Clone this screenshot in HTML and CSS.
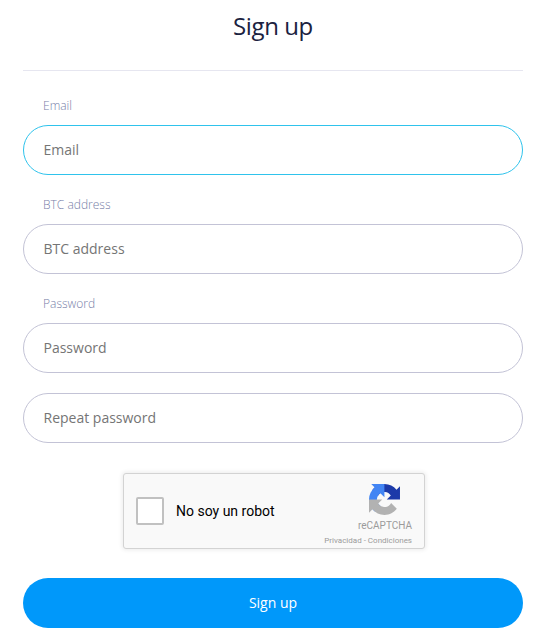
FILE: index.html
```html
<!DOCTYPE html>
<html lang="en">

<head>
    <meta charset="UTF-8">
    <meta name="viewport" content="width=device-width, initial-scale=1.0">
    <title>Sign up</title>
    <link rel="stylesheet" href="styles.css">
</head>

<body>
    <form class="signup">
        <h1 class="title">Sign up</h1>

        <div class="field">
            <label class="field-label" for="email">Email</label>
            <input class="field-input field-input-focus" id="email" type="text" placeholder="Email">
        </div>
        <div class="field">
            <label class="field-label" for="btc">BTC address</label>
            <input class="field-input" id="btc" type="text" placeholder="BTC address">
        </div>
        <div class="field">
            <label class="field-label" for="password">Password</label>
            <input class="field-input" id="password" type="text" placeholder="Password">
        </div>
        <input class="field-input repeat" type="text" placeholder="Repeat password">

        <div class="captcha">
            <span class="captcha-box"></span>
            <span class="captcha-text">No soy un robot</span>
            <div class="captcha-brand">
                <svg class="captcha-logo" viewBox="0 0 64 64" width="31" height="31">
                    <path fill="#1c3aa9" d="M64 31.955l-.033-1.37V4.687l-7.16 7.16C50.948 4.674 42.033.093 32.05.093c-10.4 0-19.622 4.96-25.458 12.64l11.736 11.86a15.55 15.55 0 0 1 4.754-5.334c2.05-1.6 4.952-2.906 8.968-2.906.485 0 .86.057 1.135.163 4.976.393 9.288 3.14 11.828 7.124l-8.307 8.307c10.522-.04 22.4-.066 27.295.005"/>
                    <path fill="#4285f4" d="M31.862.094l-1.37.033H4.594l7.16 7.16C4.58 13.147 0 22.06 0 32.046c0 10.4 4.96 19.622 12.64 25.458l11.86-11.736a15.55 15.55 0 0 1-5.334-4.754c-1.6-2.05-2.906-4.952-2.906-8.968 0-.485.057-.86.163-1.135.393-4.976 3.14-9.288 7.124-11.828l8.307 8.307c-.04-10.522-.066-22.4.005-27.295"/>
                    <path fill="#b2b2b2" d="M.001 32.045l.033 1.37v25.898l7.16-7.16c5.86 7.173 14.774 11.754 24.76 11.754 10.4 0 19.622-4.96 25.458-12.64L45.677 39.407a15.55 15.55 0 0 1-4.754 5.334c-2.05 1.6-4.952 2.906-8.968 2.906-.485 0-.86-.057-1.135-.163-4.976-.393-9.288-3.14-11.828-7.124l8.307-8.307c-10.522.04-22.4.066-27.295-.005"/>
                </svg>
                <span class="captcha-name">reCAPTCHA</span>
                <span class="captcha-links">Privacidad - Condiciones</span>
            </div>
        </div>

        <button class="submit" type="button">Sign up</button>
    </form>
</body>

</html>
```

FILE: styles.css
```css
* {
    box-sizing: border-box;
    padding: 0;
    margin: 0;
}

body {
    background: #fff;
    font-family: "Open Sans", "Liberation Sans", sans-serif;
}

.signup {
    width: 500px;
    margin-left: 23px;
}

.title {
    height: 71px;
    border-bottom: 1px solid #e6e6f0;
    margin-bottom: 25px;
    font-size: 24px;
    font-weight: 400;
    letter-spacing: -0.4px;
    line-height: 52px;
    text-align: center;
    color: #1b2240;
}

.field {
    margin-bottom: 20px;
}

.field-label {
    display: block;
    height: 29px;
    padding: 1px 0 0 20px;
    font-size: 12px;
    font-weight: 300;
    line-height: 18px;
    color: #7780a8;
}

.field-input {
    display: block;
    width: 100%;
    height: 50px;
    padding: 0 20px 2px 19.5px;
    border: 1px solid #c3c3d6;
    border-radius: 25px;
    background: #fff;
    font-family: inherit;
    font-size: 14px;
    color: #333;
    outline: none;
}

.field-input::placeholder {
    color: #757575;
    opacity: 1;
}

.field-input-focus {
    border-color: #2fc3ec;
}

.repeat {
    margin-bottom: 30px;
}

.captcha {
    display: flex;
    align-items: center;
    width: 302px;
    height: 76px;
    margin: 0 0 29px 100px;
    padding-left: 12px;
    background: #f9f9f9;
    border: 1px solid #d3d3d3;
    border-radius: 3px;
    box-shadow: 0 0 4px 1px rgba(0, 0, 0, 0.08);
    font-family: Roboto, "Liberation Sans", sans-serif;
}

.captcha-box {
    width: 28px;
    height: 28px;
    background: #fff;
    border: 2px solid #c1c1c1;
    border-radius: 2px;
}

.captcha-text {
    margin-left: 12px;
    font-size: 14px;
    color: #000;
}

.captcha-brand {
    display: flex;
    flex-direction: column;
    align-items: flex-end;
    margin-left: auto;
    margin-right: 12px;
    margin-top: 8px;
    color: #9b9b9b;
}

.captcha-logo {
    margin-right: 12px;
}

.captcha-name {
    margin-top: 4px;
    font-size: 10px;
    line-height: 13px;
}

.captcha-links {
    margin-top: 4px;
    font-size: 8px;
    line-height: 10px;
    white-space: nowrap;
}

.submit {
    display: block;
    width: 100%;
    height: 50px;
    padding-bottom: 2px;
    border: 0;
    border-radius: 25px;
    background: #0098fa;
    font-family: inherit;
    font-size: 14px;
    color: #fff;
}
```
